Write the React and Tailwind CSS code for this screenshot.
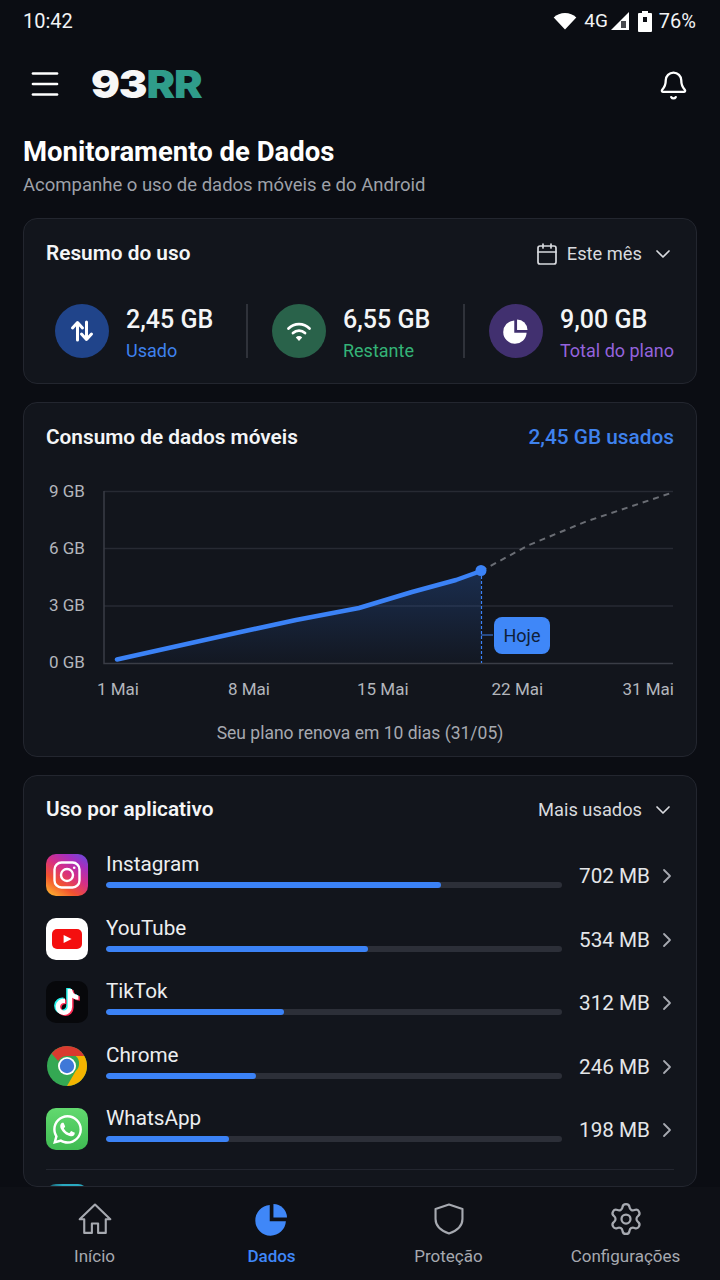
import React from 'react';
import { Menu, Bell, Calendar, ChevronDown, ChevronRight, Settings } from 'lucide-react';
import { FaTiktok, FaWhatsapp } from 'react-icons/fa';

const apps = [
  { name: 'Instagram', value: '702 MB', bar: 'w-[73.5%]', icon: 'instagram' },
  { name: 'YouTube', value: '534 MB', bar: 'w-[57.4%]', icon: 'youtube' },
  { name: 'TikTok', value: '312 MB', bar: 'w-[39%]', icon: 'tiktok' },
  { name: 'Chrome', value: '246 MB', bar: 'w-[32.9%]', icon: 'chrome' },
  { name: 'WhatsApp', value: '198 MB', bar: 'w-[26.9%]', icon: 'whatsapp' },
];

const PieIcon = ({ className }) => (
  <svg className={className} viewBox="0 0 24 24" fill="currentColor">
    <path d="M10.4 2.2v11.4h11.4A10.8 10.8 0 1 1 10.4 2.2z" />
    <path d="M13 1.4a9.8 9.8 0 0 1 9.6 9.6H13z" />
  </svg>
);

const AppIcon = ({ type }) => {
  if (type === 'instagram') {
    return (
      <div className="w-[42px] h-[42px] rounded-[10px] flex items-center justify-center bg-[linear-gradient(35deg,#fdb02f_5%,#f3532f_30%,#d62f86_55%,#a52fc0_78%,#5f4fe0_100%)]">
        <svg className="w-8 h-8" viewBox="0 0 32 32" fill="none" stroke="#fff" strokeWidth="2.4">
          <rect x="3.5" y="3.5" width="25" height="25" rx="7" />
          <circle cx="16" cy="16" r="6" />
          <circle cx="23.2" cy="8.8" r="1.3" fill="#fff" stroke="none" />
        </svg>
      </div>
    );
  }
  if (type === 'youtube') {
    return (
      <div className="w-[42px] h-[42px] rounded-[10px] bg-white flex items-center justify-center">
        <svg className="w-8 h-6" viewBox="0 0 32 24">
          <rect x="1" y="2" width="30" height="20" rx="5" fill="#f40f0f" />
          <path d="M12.6 8l8 4-8 4z" fill="#fff" />
        </svg>
      </div>
    );
  }
  if (type === 'tiktok') {
    return (
      <div className="relative w-[42px] h-[42px] rounded-[10px] bg-[#07080b] flex items-center justify-center">
        <FaTiktok className="absolute w-[26px] h-[26px] text-[#25f4ee] -translate-x-[1.5px] -translate-y-[1px]" />
        <FaTiktok className="absolute w-[26px] h-[26px] text-[#fe2c55] translate-x-[1.5px] translate-y-[1px]" />
        <FaTiktok className="absolute w-[26px] h-[26px] text-white" />
      </div>
    );
  }
  if (type === 'chrome') {
    return (
      <svg className="w-[42px] h-[42px]" viewBox="0 0 42 42">
        <circle cx="21" cy="21" r="20" fill="#34a853" />
        <path d="M21 1a20 20 0 0 1 17.3 10H21a10 10 0 0 0-8.7 5L5.5 8.5A20 20 0 0 1 21 1z" fill="#d93a2f" />
        <path d="M38.3 11A20 20 0 0 1 21 41l8.7-15a10 10 0 0 0 0-15z" fill="#f4b400" />
        <circle cx="21" cy="21" r="9" fill="#fff" />
        <circle cx="21" cy="21" r="7.2" fill="#3f78d8" />
      </svg>
    );
  }
  return (
    <div className="w-[42px] h-[42px] rounded-[10px] bg-[linear-gradient(180deg,#62d96f,#3fbb52)] flex items-center justify-center">
      <FaWhatsapp className="w-[33px] h-[33px] text-white" />
    </div>
  );
};

const Stat = ({ circle, value, label, labelColor, icon, width }) => (
  <div className={`flex items-center gap-[17px] ${width}`}>
    <div className={`w-[54px] h-[54px] rounded-full flex items-center justify-center shrink-0 ${circle}`}>{icon}</div>
    <div className="pt-[7px]">
      <div className="text-[25px] leading-[30px] font-medium text-[#f4f5f7]">{value}</div>
      <div className={`text-[18px] leading-[26px] mt-[3px] whitespace-nowrap ${labelColor}`}>{label}</div>
    </div>
  </div>
);

const NavItem = ({ icon, label, active }) => (
  <div className="flex flex-col items-center w-[177px]">
    <div className={`h-[34px] flex items-center justify-center ${active ? 'text-[#3f87f8]' : 'text-[#a6a9b0]'}`}>{icon}</div>
    <span className={`mt-[9px] text-[17px] leading-[22px] whitespace-nowrap ${active ? 'text-[#3f87f8] font-medium' : 'text-[#a6a9b0]'}`}>{label}</span>
  </div>
);

export default function App() {
  return (
    <div className="w-[720px] h-[1280px] flex flex-col overflow-hidden bg-[#0b0d13] text-white font-['Roboto',sans-serif]">
      {/* Status bar */}
      <div className="h-[42px] shrink-0 flex items-center justify-between pl-[23px] pr-[24px] text-[20px]">
        <span className="text-[#f2f3f5]">10:42</span>
        <div className="flex items-center text-[#f2f3f5]">
          <svg className="w-6 h-[18px]" viewBox="0 0 24 18" fill="#fff">
            <path d="M12 17.5L.7 5.4C3.7 2.6 7.6 1 12 1s8.3 1.6 11.3 4.4z" />
          </svg>
          <span className="ml-[7px] text-[19px]">4G</span>
          <svg className="ml-[2px] w-[20px] h-[20px]" viewBox="0 0 20 20">
            <path d="M1 19L19 1v18z" fill="#fff" />
            <path d="M11 10h5v7h-5z" fill="#0b0d13" opacity="0.75" />
          </svg>
          <svg className="ml-[8px] w-[14px] h-[21px]" viewBox="0 0 14 21" fill="#fff">
            <path d="M4 0h6v2h3a1 1 0 0 1 1 1v17a1 1 0 0 1-1 1H1a1 1 0 0 1-1-1V3a1 1 0 0 1 1-1h3z" />
            <path d="M5 6h4v5H5z" fill="#0b0d13" />
          </svg>
          <span className="ml-[7px]">76%</span>
        </div>
      </div>

      <main className="flex-1 min-h-0 overflow-hidden">
        {/* Header */}
        <div className="h-[84px] flex items-center justify-between pl-[27px] pr-[31px]">
          <Menu className="w-9 h-9 text-white" strokeWidth={1.8} />
          <div className="flex-1 ml-[28px] text-[38px] leading-none font-black font-['Inter',sans-serif] tracking-[-1px] origin-left scale-x-[1.13]">
            <span className="text-[#f7f7f7]">93</span><span className="text-[#2f9c8a]">RR</span>
          </div>
          <Bell className="w-[31px] h-[31px] text-white mt-[2px]" strokeWidth={1.8} />
        </div>

        <div className="px-[23px]">
          <h1 className="text-[27.5px] leading-[34px] font-bold text-white mt-[9px]">Monitoramento de Dados</h1>
          <p className="text-[18.5px] leading-[24px] text-[#9ea1a9] mt-[4px]">Acompanhe o uso de dados móveis e do Android</p>

          {/* Resumo */}
          <section className="mt-[21px] h-[166px] rounded-[14px] border border-[#23262f] bg-[#12151c] px-[22px] pt-[21px]">
            <div className="flex items-center justify-between h-[28px]">
              <h2 className="text-[20.8px] font-semibold text-[#f4f5f7]">Resumo do uso</h2>
              <div className="flex items-center text-[#d8dade]">
                <Calendar className="w-6 h-6" strokeWidth={1.7} />
                <span className="ml-[8px] text-[18.3px]">Este mês</span>
                <ChevronDown className="ml-[9px] -mr-[1px] w-6 h-6" strokeWidth={1.7} />
              </div>
            </div>
            <div className="flex items-center mt-[30px] pl-[9px]">
              <Stat
                width="w-[191px]"
                circle="bg-[#20448a]"
                value="2,45 GB"
                label="Usado"
                labelColor="text-[#3f82ee]"
                icon={
                  <svg className="w-6 h-6" viewBox="0 0 24 24" fill="none" stroke="#fff" strokeWidth="3" strokeLinecap="round" strokeLinejoin="round">
                    <path d="M7.5 21V4M2.5 9l5-5.5 5 5.5" />
                    <path d="M16.5 3v17M11.5 15l5 5.5 5-5.5" />
                  </svg>
                }
              />
              <div className="w-[2px] h-[54px] bg-[#2f323a]" />
              <div className="w-[24px]" />
              <Stat
                width="w-[191px]"
                circle="bg-[#29624a]"
                value="6,55 GB"
                label="Restante"
                labelColor="text-[#34b377]"
                icon={
                  <svg className="w-7 h-7" viewBox="0 0 28 28" fill="none" stroke="#fff" strokeWidth="2.8" strokeLinecap="round">
                    <path d="M3.5 11.5a15 15 0 0 1 21 0" />
                    <path d="M8 16a9 9 0 0 1 12 0" />
                    <path d="M14 24l-3.2-3.6a4.6 4.6 0 0 1 6.4 0z" fill="#fff" stroke="none" />
                  </svg>
                }
              />
              <div className="w-[2px] h-[54px] bg-[#2f323a]" />
              <div className="w-[24px]" />
              <Stat
                circle="bg-[#41306f]"
                value="9,00 GB"
                label="Total do plano"
                labelColor="text-[#9463dd]"
                icon={<PieIcon className="w-[26px] h-[26px] text-white" />}
              />
            </div>
          </section>

          {/* Consumo */}
          <section className="mt-[18px] h-[355px] rounded-[14px] border border-[#23262f] bg-[#12151c] px-[22px] pt-[21px]">
            <div className="flex items-center justify-between h-[28px]">
              <h2 className="text-[20.8px] font-semibold text-[#f4f5f7]">Consumo de dados móveis</h2>
              <span className="text-[20.8px] font-medium text-[#3f82ee]">2,45 GB usados</span>
            </div>
            <div className="flex mt-[38px]">
              <div className="w-[58px] h-[195px] flex flex-col justify-between pl-[3px] text-[17px] leading-[24px] text-[#b3b6bc] -mt-[11px] mb-[-11px] whitespace-nowrap">
                <span>9 GB</span>
                <span>6 GB</span>
                <span>3 GB</span>
                <span>0 GB</span>
              </div>
              <div className="relative flex-1 h-[175px]">
                <svg className="w-[571px] h-[175px]" viewBox="104 490 571 175" fill="none">
                  <defs>
                    <linearGradient id="areaFill" x1="0" y1="0" x2="0" y2="1">
                      <stop offset="0" stopColor="#2a5cb0" stopOpacity="0.34" />
                      <stop offset="1" stopColor="#2a5cb0" stopOpacity="0.04" />
                    </linearGradient>
                  </defs>
                  <path d="M105 548.5H674M105 606H674M105 491.5H674" stroke="#272a33" strokeWidth="1.5" />
                  <path d="M105 491V663.5H674" stroke="#3a3d46" strokeWidth="1.5" />
                  <path d="M118 660L237 633L297 620L360 608L413 592L457 580L482 571V663H118Z" fill="url(#areaFill)" />
                  <path d="M482.5 571V663" stroke="#3b82f6" strokeWidth="1.2" strokeDasharray="3 2" />
                  <path d="M482 571L530 545L587 521.5L620 510.5L673.5 492.5" stroke="#6a6d74" strokeWidth="2" strokeDasharray="6 5" />
                  <path d="M118 659.5L237 633L297 620L360 608L413 592L457 580L482 571" stroke="#3b82f6" strokeWidth="4.5" strokeLinecap="round" strokeLinejoin="round" />
                  <circle cx="482" cy="570.5" r="5.5" fill="#3b82f6" />
                  <path d="M482 635H494" stroke="#3f82ee" strokeWidth="1" />
                </svg>
                <div className="absolute left-[391px] top-[127px] w-[56px] h-[37px] rounded-[8px] bg-[#3f87f8] flex items-center justify-center text-[18px] text-[#0f2038]">Hoje</div>
              </div>
            </div>
            <div className="flex mt-[12px] text-[17px] leading-[24px] text-[#b3b6bc] whitespace-nowrap">
              <span className="ml-[51px]">1 Mai</span>
              <span className="ml-[89px]">8 Mai</span>
              <span className="ml-[87px]">15 Mai</span>
              <span className="ml-[83px]">22 Mai</span>
              <span className="ml-auto">31 Mai</span>
            </div>
            <p className="mt-[20px] text-center text-[17.5px] leading-[24px] text-[#a6a9b0]">Seu plano renova em 10 dias (31/05)</p>
          </section>

          {/* Apps */}
          <section className="mt-[18px] h-[412px] overflow-hidden rounded-[14px] border border-[#23262f] bg-[#12151c] px-[22px] pt-[20px]">
            <div className="flex items-center justify-between h-[28px]">
              <h2 className="text-[20.8px] font-semibold text-[#f4f5f7]">Uso por aplicativo</h2>
              <div className="flex items-center text-[#d8dade]">
                <span className="text-[18.3px]">Mais usados</span>
                <ChevronDown className="ml-[9px] -mr-[1px] w-6 h-6" strokeWidth={1.7} />
              </div>
            </div>
            <div className="mt-[30px] flex flex-col gap-[21.5px]">
              {apps.map((app) => (
                <div key={app.name} className="flex items-center h-[42px]">
                  <AppIcon type={app.icon} />
                  <div className="ml-[18px] w-[456px] mb-[10px]">
                    <div className="text-[20.7px] leading-[24px] text-[#eceef0]">{app.name}</div>
                    <div className="mt-[6px] h-[6px] rounded-full bg-[#2c2f38] overflow-hidden">
                      <div className={`h-full rounded-full bg-[#3b82f6] ${app.bar}`} />
                    </div>
                  </div>
                  <span className="ml-auto mt-[4px] text-[20.7px] text-[#e4e6e9]">{app.value}</span>
                  <ChevronRight className="ml-[5px] -mr-[5px] mt-[2px] w-6 h-6 text-[#a6a9b0]" strokeWidth={1.8} />
                </div>
              ))}
            </div>
            <div className="mt-[19px] border-t border-[#23262f]" />
            <div className="mt-[14px] flex items-center h-[42px]">
              <div className="w-[42px] h-[42px] rounded-[10px] bg-[linear-gradient(90deg,#14505f,#2aa9c0_40%)]" />
              <div className="ml-[18px] mb-[10px]">
                <div className="text-[20.7px] leading-[24px] text-[#eceef0]">Maps</div>
              </div>
            </div>
          </section>
        </div>
      </main>

      {/* Bottom nav */}
      <nav className="h-[93px] shrink-0 bg-[#0e1016] flex items-start justify-center pt-[15px]">
        <NavItem
          label="Início"
          icon={
            <svg className="w-[34px] h-[34px]" viewBox="0 0 24 24" fill="none" stroke="currentColor" strokeWidth="1.5" strokeLinejoin="round">
              <path d="M12 1.8L1.2 12.2h3.2v9.6h5.4v-6.6h4.4v6.6h5.4v-9.6h3.2z" />
            </svg>
          }
        />
        <NavItem active label="Dados" icon={<PieIcon className="w-[34px] h-[34px]" />} />
        <NavItem
          label="Proteção"
          icon={
            <svg className="w-[34px] h-[34px]" viewBox="0 0 24 24" fill="none" stroke="currentColor" strokeWidth="1.5" strokeLinejoin="round">
              <path d="M12 1.8L21.5 5v7c0 5-4.5 8.5-9.5 10.2C7 20.5 2.5 17 2.5 12V5z" />
            </svg>
          }
        />
        <NavItem label="Configurações" icon={<Settings className="w-9 h-9" strokeWidth={1.5} />} />
      </nav>
    </div>
  );
}
